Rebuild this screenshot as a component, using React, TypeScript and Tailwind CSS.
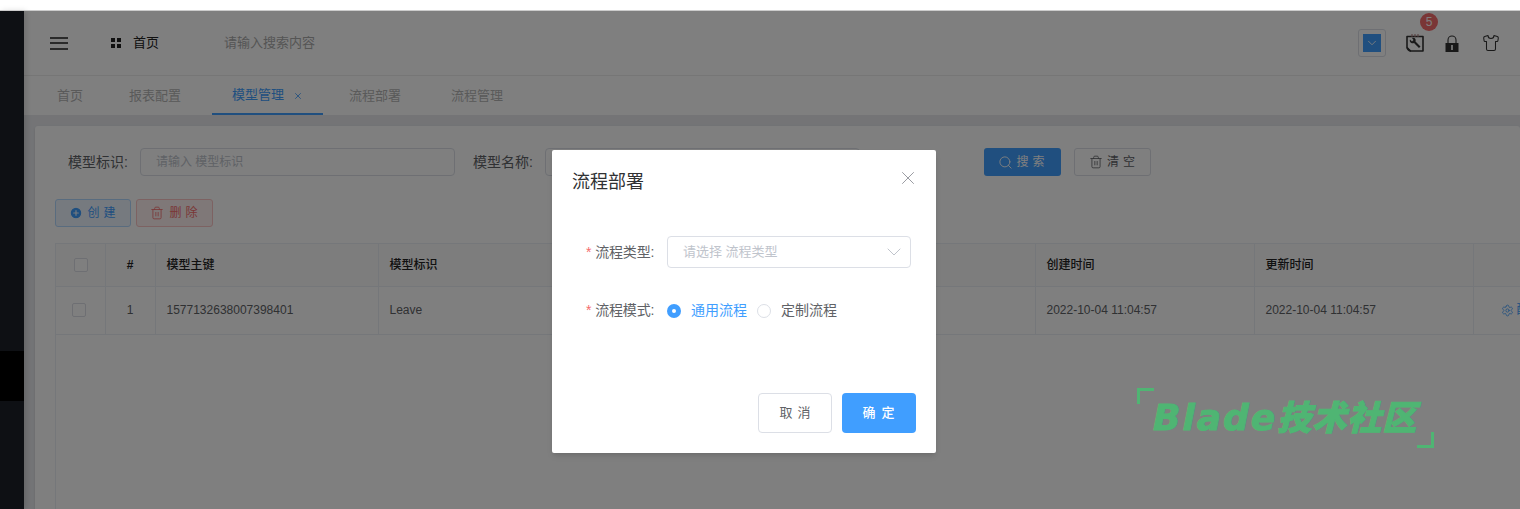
import { ChevronDown, CirclePlus, Search, Settings, Shirt, Trash2, X } from 'lucide-react';

const tabs = [
  { label: '首页', cls: 'ml-[13px]' },
  { label: '报表配置', cls: 'ml-[6px]' },
  { label: '模型管理', cls: 'ml-[11px]', active: true },
  { label: '流程部署', cls: 'ml-[6px]' },
  { label: '流程管理', cls: 'ml-[10px]' },
];

const columns = ['模型主键', '模型标识', '', '', '创建时间', '更新时间', ''];
const row = ['1577132638007398401', 'Leave', '', '', '2022-10-04 11:04:57', '2022-10-04 11:04:57'];

const Header: React.FC = () => (
  <header className="relative flex h-[65px] shrink-0 items-center border-b border-[#ececec] bg-white">
    <div className="ml-[26px] flex h-[13px] w-[18px] flex-col justify-between">
      <span className="h-[2px] bg-[#555]" />
      <span className="h-[2px] bg-[#555]" />
      <span className="h-[2px] bg-[#555]" />
    </div>
    <div className="ml-[43px] grid h-[10px] w-[10px] grid-cols-2 gap-[2px]">
      <span className="bg-[#222]" />
      <span className="bg-[#222]" />
      <span className="bg-[#222]" />
      <span className="bg-[#222]" />
    </div>
    <span className="ml-[12px] text-[13px] text-[#222]">首页</span>
    <span className="ml-[65px] text-[13px] text-[#aaa]">请输入搜索内容</span>
    <div className="ml-auto flex items-center">
      <div className="flex h-[28px] w-[28px] items-center justify-center rounded-[3px] border border-[#dcdfe6]">
        <div className="flex h-[18px] w-[18px] items-center justify-center bg-[#409eff]">
          <ChevronDown size={14} strokeWidth={1.5} className="text-white" />
        </div>
      </div>
      <div className="relative ml-[19px]">
        {/* notebook with a wrench */}
        <svg width="20" height="20" viewBox="0 0 20 20" fill="none" stroke="#333" strokeWidth="1.3" className="block">
          <path d="M2 3.5h16v14.5H5.5L2 14.5z" strokeWidth="1.6" strokeLinejoin="round" />
          <path d="M2 14.5c.5 2 2 3.2 4 3.5" strokeWidth="1.6" />
          <path d="M7 1v3M10 1v3M13 1v3" stroke="#a77" strokeWidth="1" />
          <path d="M5 6.500l2 2 1.500-1.500-1.500-2c2-1 4.500.5 3.500 3.500l5 5-1.500 1.500-5-5c-2.500 1-5-1-4-3.500z" fill="#333" stroke="none" />
        </svg>
        <span className="absolute left-[15px] top-[-20px] flex h-[18px] w-[18px] items-center justify-center rounded-full bg-[#f56c6c] text-[12px] text-white">5</span>
      </div>
      <svg width="16" height="17" viewBox="0 0 16 17" className="ml-[19px] block">
        <path d="M4 8V5a4 4 0 0 1 8 0v3" fill="none" stroke="#333" strokeWidth="1.1" />
        <path d="M1.500 8h13v9h-13z" fill="#333" />
        <path d="M7 10h2v5H7z" fill="#ddd" />
      </svg>
      <Shirt size={18} strokeWidth={1.4} className="ml-[22px] mr-[20px] text-[#333]" />
    </div>
  </header>
);

const Tabs: React.FC = () => (
  <nav className="flex h-[39px] shrink-0 bg-[#fff]">
    {tabs.map((tab) => (
      <div
        key={tab.label}
        className={`${tab.cls} flex h-full items-center px-5 text-[13px] ${
          tab.active ? 'border-b-2 border-[#409eff] text-[#409eff]' : 'text-[#b4b4b4]'
        }`}
      >
        {tab.label}
        {tab.active && <X size={10} className="ml-[9px] mt-[3px]" />}
      </div>
    ))}
  </nav>
);

const SearchForm: React.FC = () => (
  <div className="flex h-[28px] items-center text-[14px] text-[#606266]">
    <span className="ml-[13px] w-[72px]">模型标识:</span>
    <div className="flex h-[28px] w-[315px] items-center rounded-[4px] border border-[#dcdfe6] pl-[15px] text-[12px] text-[#c0c4cc]">
      请输入 模型标识
    </div>
    <span className="ml-[18px] w-[72px]">模型名称:</span>
    <div className="h-[28px] w-[315px] rounded-[4px] border border-[#dcdfe6]" />
    <button className="ml-[124px] flex h-[28px] w-[77px] items-center justify-center gap-[3px] rounded-[3px] bg-[#409eff] pl-[2px] text-[12px] tracking-[4px] text-white">
      <Search size={15} strokeWidth={1.5} />
      搜索
    </button>
    <button className="ml-[13px] flex h-[28px] w-[77px] items-center justify-center gap-[4px] rounded-[3px] border border-[#dcdfe6] pl-[3px] text-[12px] tracking-[4px] text-[#606266]">
      <Trash2 size={14} strokeWidth={1.4} />
      清空
    </button>
  </div>
);

const Table: React.FC = () => (
  <div className="mt-[16px] h-[300px] w-[1500px] border-l border-t border-[#ebeef5]">
    <table className="w-full table-fixed border-collapse text-[12px]">
      <colgroup>
        <col className="w-[49px]" />
        <col className="w-[50px]" />
        <col className="w-[223px]" />
        <col className="w-[219px]" />
        <col className="w-[219px]" />
        <col className="w-[219px]" />
        <col className="w-[219px]" />
        <col className="w-[219px]" />
        <col />
      </colgroup>
      <thead>
        <tr className="h-[42px] border-b border-[#ebeef5] bg-[#fafafa] text-[#222]">
          <th className="border-r border-[#ebeef5]">
            <div className="ml-[18px] h-[14px] w-[14px] rounded-[2px] border border-[#dcdfe6] bg-white" />
          </th>
          <th className="border-r border-[#ebeef5] font-bold">#</th>
          {columns.map((col, i) => (
            <th key={i} className="border-r border-[#ebeef5] pl-[11px] text-left font-medium">
              {col}
            </th>
          ))}
        </tr>
      </thead>
      <tbody>
        <tr className="h-[48px] border-b border-[#ebeef5] text-[#606266]">
          <td className="border-r border-[#ebeef5]">
            <div className="ml-[16px] h-[14px] w-[14px] rounded-[2px] border border-[#dcdfe6] bg-white" />
          </td>
          <td className="border-r border-[#ebeef5] text-center">1</td>
          {row.map((cell, i) => (
            <td key={i} className="border-r border-[#ebeef5] pl-[11px]">
              {cell}
            </td>
          ))}
          <td className="pl-[27px] text-[#409eff]">
            <div className="flex items-center gap-[3px] whitespace-nowrap">
              <Settings size={13} strokeWidth={1.5} />
              配置
            </div>
          </td>
        </tr>
      </tbody>
    </table>
  </div>
);

const Modal: React.FC = () => (
  <div className="absolute left-[552px] top-[150px] z-20 h-[303px] w-[384px] rounded-[2px] bg-white shadow-md">
    <div className="flex items-start justify-between pl-[20px] pr-[17px] pt-[20px]">
      <span className="text-[18px] leading-[24px] text-[#303133]">流程部署</span>
      <X size={22} strokeWidth={1} className="mt-[-3px] text-[#909399]" />
    </div>
    <div className="mt-[42px] flex items-center text-[14px] text-[#606266]">
      <span className="ml-[34px] w-[81px] tracking-[-0.2px]">
        <span className="mr-[4px] text-[#f56c6c]">*</span>流程类型:
      </span>
      <div className="flex h-[32px] w-[244px] items-center justify-between rounded-[4px] border border-[#dcdfe6] pl-[15px] pr-[4px] text-[13px] text-[#c0c4cc]">
        请选择 流程类型
        <ChevronDown size={24} strokeWidth={1} />
      </div>
    </div>
    <div className="mt-[32px] flex items-center text-[14px] text-[#606266]">
      <span className="ml-[34px] w-[81px] tracking-[-0.2px]">
        <span className="mr-[4px] text-[#f56c6c]">*</span>流程模式:
      </span>
      <span className="flex h-[14px] w-[14px] items-center justify-center rounded-full bg-[#409eff]">
        <span className="h-[4px] w-[4px] rounded-full bg-white" />
      </span>
      <span className="ml-[10px] text-[#409eff]">通用流程</span>
      <span className="ml-[10px] h-[14px] w-[14px] rounded-full border border-[#dcdfe6]" />
      <span className="ml-[10px]">定制流程</span>
    </div>
    <div className="mt-[72px] flex justify-end gap-[10px] pr-[20px]">
      <button className="h-[40px] w-[74px] rounded-[4px] border border-[#dcdfe6] pl-[5px] text-[13px] tracking-[5px] text-[#606266]">取消</button>
      <button className="h-[40px] w-[74px] rounded-[4px] bg-[#409eff] pl-[5px] text-[13px] font-medium tracking-[6px] text-white">确定</button>
    </div>
  </div>
);

const Watermark: React.FC = () => (
  <div className="absolute left-[1137px] top-[388px] z-30 h-[60px] w-[297px]">
    <span className="absolute left-0 top-0 h-[16px] w-[17px] border-l-[3px] border-t-[3px] border-[#4fb573]" />
    <span className="absolute bottom-0 right-0 h-[16px] w-[17px] border-b-[3px] border-r-[3px] border-[#4fb573]" />
    <span className="absolute left-[16px] top-[9px] flex items-baseline whitespace-nowrap font-black italic leading-[42px] text-[#4fb573] [-webkit-text-stroke:1px_#4fb573]">
      <span className="font-['DejaVu_Sans',sans-serif] text-[36px] tracking-[2px]">Blade</span>
      <span className="text-[34px] tracking-[1px]">技术社区</span>
    </span>
  </div>
);

const App: React.FC = () => {
  return (
    <div className="relative h-[509px] w-[1520px] overflow-hidden bg-white font-['Liberation_Sans','Noto_Sans_CJK_SC',sans-serif]">
      <div className="flex h-full flex-col pt-[11px]">
        <div className="flex min-h-0 flex-1">
          <aside className="relative z-[1] flex w-[24px] shrink-0 flex-col bg-[#1c2028] pt-[340px] shadow-[2px_0_6px_rgba(0,0,0,0.15)]">
            <div className="h-[50px] bg-black" />
          </aside>
          <main className="flex min-w-0 flex-1 flex-col bg-[#e8e9ed]">
            <Header />
            <Tabs />
            <div className="flex-1 pl-[11px] pt-[11px]">
              <div className="h-full rounded-[3px] bg-white pl-[20px] pt-[22px] shadow-sm">
                <SearchForm />
                <div className="mt-[23px] flex gap-[5px] text-[12px] tracking-[4px]">
                  <button className="flex h-[28px] w-[76px] items-center justify-center gap-[4px] rounded-[3px] border border-[#b3d8ff] bg-[#ecf5ff] pl-[3px] text-[#409eff]">
                    <CirclePlus size={14} fill="#409eff" stroke="#ecf5ff" />
                    创建
                  </button>
                  <button className="flex h-[28px] w-[77px] items-center justify-center gap-[5px] rounded-[3px] border border-[#fbc4c4] bg-[#fef0f0] pl-[3px] text-[#f56c6c]">
                    <Trash2 size={14} strokeWidth={1.4} />
                    删除
                  </button>
                </div>
                <Table />
              </div>
            </div>
          </main>
        </div>
      </div>
      <div className="absolute inset-x-0 bottom-0 top-[10px] z-10 border-t border-[#ccc] bg-black/50" />
      <Modal />
      <Watermark />
    </div>
  );
};

export default App;
